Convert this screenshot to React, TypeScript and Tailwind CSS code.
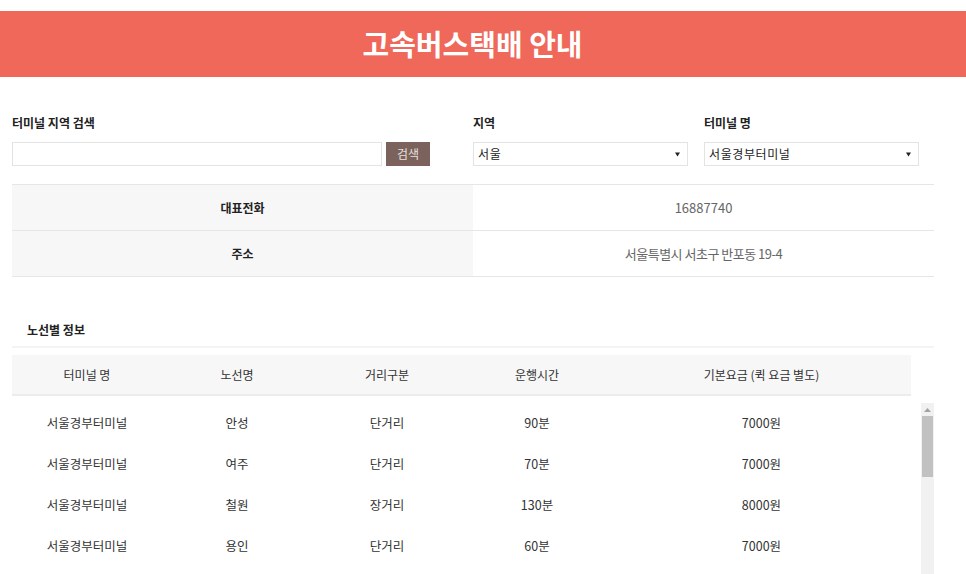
import React from "react";

const font = { fontFamily: '"Noto Sans CJK KR", "Noto Sans", sans-serif' };

const rows = [
  ["서울경부터미널", "안성", "단거리", "90분", "7000원"],
  ["서울경부터미널", "여주", "단거리", "70분", "7000원"],
  ["서울경부터미널", "철원", "장거리", "130분", "8000원"],
  ["서울경부터미널", "용인", "단거리", "60분", "7000원"],
];

function Select({ value, w }: { value: string; w: string }) {
  return (
    <div className={`${w} h-[24px] border border-[#e3e3e3] flex items-center justify-between pl-[4px] pr-[7px] text-[12px] tracking-[0.6px] text-[#222]`}>
      <span>{value}</span>
      <svg width="5" height="5" viewBox="0 0 5 5"><path d="M0 0.5 L5 0.5 L2.5 4.5 Z" fill="#222" /></svg>
    </div>
  );
}

export default function App() {
  return (
    <div className="h-[574px] w-[966px] overflow-hidden bg-white" style={font}>
      <div className="pt-[11px]">
        <div className="h-[66px] bg-[#ef685a] flex items-center justify-center pr-[21px] text-white text-[29px] font-bold">
          고속버스택배 안내
        </div>
      </div>

      <div className="ml-[12px] w-[922px]">
        <div className="flex pt-[37px]">
          <div className="w-[461px]">
            <div className="text-[12px] font-bold text-[#222] leading-[18px]">터미널 지역 검색</div>
            <div className="flex gap-[4px] mt-[10px]">
              <div className="w-[370px] h-[24px] border border-[#e3e3e3]" />
              <div className="w-[44px] h-[24px] bg-[#7b625d] flex items-center justify-center text-[12px] text-[#e6e0de]">검색</div>
            </div>
          </div>
          <div className="w-[231px]">
            <div className="text-[12px] font-bold text-[#222] leading-[18px]">지역</div>
            <div className="mt-[10px]">
              <Select value="서울" w="w-[215px]" />
            </div>
          </div>
          <div className="w-[215px]">
            <div className="text-[12px] font-bold text-[#222] leading-[18px]">터미널 명</div>
            <div className="mt-[10px]">
              <Select value="서울경부터미널" w="w-[215px]" />
            </div>
          </div>
        </div>

        <div className="mt-[18px] border-t border-[#e6e6e6]">
          <div className="grid grid-cols-2 h-[46px] border-b border-[#e6e6e6]">
            <div className="bg-[#f7f7f7] flex items-center justify-center text-[12px] font-bold text-[#222]">대표전화</div>
            <div className="flex items-center justify-center text-[13px] text-[#666]">16887740</div>
          </div>
          <div className="grid grid-cols-2 h-[46px] border-b border-[#e6e6e6]">
            <div className="bg-[#f7f7f7] flex items-center justify-center text-[12px] font-bold text-[#222]">주소</div>
            <div className="flex items-center justify-center text-[13px] text-[#666] tracking-[-0.5px]">서울특별시 서초구 반포동 19-4</div>
          </div>
        </div>

        <div className="pt-[44px] pl-[15px] text-[12px] font-bold text-[#222] leading-[18px]">노선별 정보</div>
        <div className="mt-[7px] h-[2px] bg-[#f4f4f4]" />

        <div className="mt-[7px] w-[899px] h-[41px] bg-[#f7f7f7] border-b-2 border-[#ececec] grid grid-cols-[150px_150px_150px_150px_299px] items-center text-center text-[12px] text-[#333]">
          <div>터미널 명</div>
          <div>노선명</div>
          <div>거리구분</div>
          <div>운행시간</div>
          <div>기본요금 (퀵 요금 별도)</div>
        </div>

        <div className="mt-[7px] flex gap-[10px] h-[200px] overflow-hidden">
          <div className="w-[899px]">
            {rows.map((r, i) => (
              <div key={i} className="h-[41px] grid grid-cols-[150px_150px_150px_150px_299px] items-center text-center text-[12.5px] text-[#333]">
                {r.map((c, j) => (
                  <div key={j}>{c}</div>
                ))}
              </div>
            ))}
          </div>
          <div className="w-[13px] bg-[#f1f1f1] flex flex-col items-center">
            <div className="h-[13px] flex items-center justify-center">
              <svg width="7" height="4" viewBox="0 0 7 4"><path d="M3.5 0 L7 4 L0 4 Z" fill="#a3a3a3" /></svg>
            </div>
            <div className="w-[11px] h-[61px] bg-[#c1c1c1]" />
          </div>
        </div>
      </div>
    </div>
  );
}
